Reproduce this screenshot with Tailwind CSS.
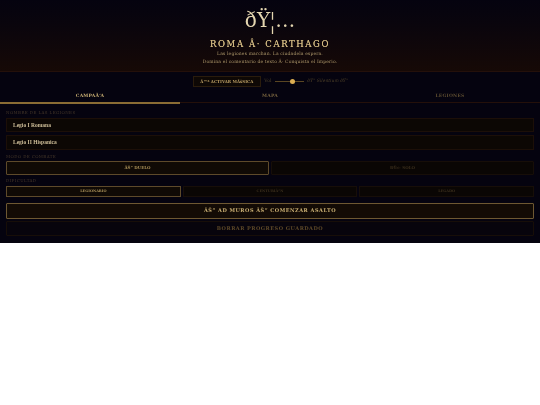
<!DOCTYPE html>
<html lang="es">
<head>
  <meta charset="UTF-8">
  <title>Roma · Carthago</title>
  <meta name="viewport" content="width=device-width, initial-scale=1.0">
  <script src="https://cdn.jsdelivr.net/npm/@tailwindcss/browser@4"></script>
</head>
<body class="bg-white min-h-screen font-['DejaVu_Serif',serif]">
  <div class="bg-[#05030f] h-[243px] flex flex-col blur-[0.35px]">
    <header class="h-[72px] flex flex-col items-center border-b border-[#24100a] bg-gradient-to-b from-[#05030f] to-[#160906]">
      <div class="h-[32px] mt-[6px] leading-[29px] text-[20px] text-[#e4d6b0]">ðŸ<span class="relative top-[2px] font-['Liberation_Serif',serif] text-[25px] leading-none">¦</span>…</div>
      <h1 class="leading-[12px] text-[8.5px] tracking-[1.6px] [text-shadow:0_0_0.4px_#d0b880] text-[#d0b880]">ROMA Â· CARTHAGO</h1>
      <p class="leading-[8px] text-[4.5px] tracking-[0.03em] text-[#b09a6c]">Las legiones marchan. La ciudadela espera.</p>
      <p class="leading-[8px] text-[4.5px] tracking-[0.03em] text-[#b09a6c]">Domina el comentario de texto Â· Conquista el Imperio.</p>
    </header>
    <div class="h-[18px] pt-[1px] flex items-center justify-center gap-[3.5px] pl-[1px]">
      <button class="w-[68px] h-[11px] border border-[#2a1c0c] bg-[#0e0805] text-[4px] font-bold text-[#b89c62] leading-none">Â™ª ACTIVAR MÃšSICA</button>
      <span class="text-[4.5px] text-[#4e4028]">Vol</span>
      <div class="relative w-[29px] h-px bg-[#5a4622]">
        <span class="absolute left-[15px] top-[-2px] size-[5px] rounded-full bg-[#dcae52]"></span>
      </div>
      <span class="text-[4.5px] italic text-[#4e4028]">ðŸ” Silentium ðŸ”</span>
    </div>
    <nav class="h-[13px] grid grid-cols-3 border-b border-[#24100a] text-[4.5px] font-bold tracking-[0.05em] text-center leading-[12px]">
      <div class="border-b-2 border-[#8a6c34] mb-[-1px] text-[#c8ae72]">CAMPAÃ‘A</div>
      <div class="text-[#75613e]">MAPA</div>
      <div class="text-[#5c4c30]">LEGIONES</div>
    </nav>
    <main class="px-[6px] pt-[7px] flex flex-col">
      <label class="leading-[6px] text-[4px] tracking-[0.1em] text-[#46382a]">NOMBRE DE LAS LEGIONES</label>
      <div class="mt-[2px] h-[14px] px-[6px] flex items-center border border-[#1c0f08] bg-[#0c0704] font-['Liberation_Serif',serif] text-[5.5px] font-bold text-[#cdbd98]">Legio I Romana</div>
      <div class="mt-[3px] h-[15px] px-[6px] flex items-center border border-[#1c0f08] bg-[#0c0704] font-['Liberation_Serif',serif] text-[5.5px] font-bold text-[#cdbd98]">Legio II Hispanica</div>
      <label class="mt-[4px] leading-[6px] text-[4px] tracking-[0.1em] text-[#46382a]">MODO DE COMBATE</label>
      <div class="mt-[1px] grid grid-cols-2 gap-[2px] text-[4px] font-bold text-center">
        <div class="h-[14px] flex items-center justify-center rounded-[1px] border border-[#5e4a2a] bg-[#100a05] text-[#a89058]">ÂŠ” DUELO</div>
        <div class="h-[14px] flex items-center justify-center rounded-[1px] border border-[#170e08] bg-[#0a0604] text-[#3a2e1c]">ÐŸ¤– SOLO</div>
      </div>
      <label class="mt-[3px] leading-[6px] text-[4px] tracking-[0.1em] text-[#46382a]">DIFICULTAD</label>
      <div class="mt-[2px] grid grid-cols-3 gap-[2px] text-[3.5px] font-bold text-center">
        <div class="h-[11px] flex items-center justify-center border border-[#5e4a2a] bg-[#100a05] text-[#a89058]">LEGIONARIO</div>
        <div class="h-[11px] flex items-center justify-center border border-[#170e08] bg-[#0a0604] text-[#3a2e1c]">CENTURIÃ“N</div>
        <div class="h-[11px] flex items-center justify-center border border-[#170e08] bg-[#0a0604] text-[#3a2e1c]">LEGADO</div>
      </div>
      <button class="mt-[6px] h-[16px] rounded-[1px] border border-[#6e5832] bg-[#130b05] text-[5px] font-bold tracking-[0.1em] text-[#c8ae72]">ÂŠ” AD MUROS ÂŠ” COMENZAR ASALTO</button>
      <button class="mt-[2px] h-[15px] rounded-[1px] border border-[#170e08] bg-[#07040c] text-[5px] font-bold tracking-[0.1em] text-[#5c4828]">BORRAR PROGRESO GUARDADO</button>
    </main>
  </div>
</body>
</html>
